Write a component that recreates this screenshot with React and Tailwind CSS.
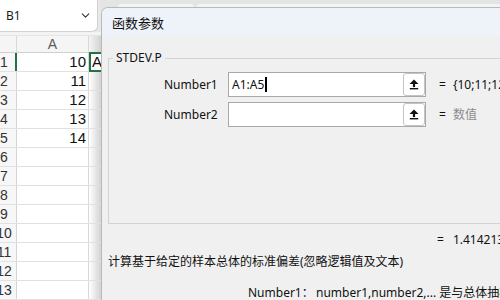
import React from 'react';
import { ChevronDown } from 'lucide-react';

const ROWS = [10, 11, 12, 13, 14, null, null, null, null, null, null, null, null];

const RefIcon = () => (
  <svg width="10" height="11" viewBox="0 0 10 11" fill="#111">
    <polygon points="5,0.5 9.5,5 0.5,5" />
    <rect x="3.9" y="4.5" width="2.2" height="3.6" />
    <rect x="0.8" y="9" width="8.4" height="1.4" />
  </svg>
);

const ArgInput = ({ value, cursor }) => (
  <div className="flex h-[25px] w-[198px] items-center justify-between border border-[#a9a9a9] bg-white pl-[3px]">
    <span className="flex items-center text-[12px] leading-[16px] text-[#111]">
      {value}
      {cursor && <span className="ml-[1px] inline-block h-[15px] w-[2px] bg-black" />}
    </span>
    <button
      type="button"
      className="flex h-[23px] w-[22px] items-center justify-center rounded-[3px] border border-[#c4c4c4] bg-white"
    >
      <RefIcon />
    </button>
  </div>
);

const Sheet = () => (
  <div className="flex w-[101px] shrink-0 flex-col overflow-hidden bg-white font-['Liberation_Sans','Noto_Sans_CJK_SC',sans-serif]">
    {/* name box */}
    <div className="flex h-[33px] bg-[#e8e8e8]">
      <div className="-ml-[6px] flex h-[32px] w-[104px] items-center justify-between rounded-br-[6px] border border-t-0 border-[#d2d2d2] bg-white pl-[11px] pr-[5px]">
        <span className="font-['Noto_Sans',sans-serif] text-[12px] text-[#1a1a1a]">B1</span>
        <ChevronDown size={13} strokeWidth={2} className="text-[#333]" />
      </div>
    </div>
    <div className="h-[7px] border-b border-[#e6e6e6] bg-[#f3f3f3]" />
    {/* column header */}
    <div className="flex h-[17px] border-b border-[#d0d0d0] bg-[#f5f5f5]">
      <div className="w-[17px] shrink-0 border-r border-[#d8d8d8]" />
      <div className="flex w-[72px] shrink-0 items-center justify-center border-r border-[#d8d8d8] text-[14px] text-[#5b5b5b]">
        A
      </div>
      <div className="flex-1 bg-linear-to-r from-[#f5f5f5] to-[#d2d2d2]" />
    </div>
    {ROWS.map((v, i) => (
      <div key={i} className="flex h-[19px] shrink-0 border-b border-[#e1e1e1]">
        <div
          className={`flex w-[17px] shrink-0 items-center bg-[#f7f7f7] ${
            i === 0 ? 'border-r-2 border-[#217346]' : 'border-r border-[#d4d4d4]'
          }`}
        >
          <span className="-ml-[9px] w-[26px] shrink-0 text-center text-[14px] text-[#333]">{i + 1}</span>
        </div>
        <div className="flex w-[72px] shrink-0 items-center justify-end border-r border-[#d8d8d8] pr-[2px] text-[15px] text-[#111]">
          {v}
        </div>
        {i === 0 ? (
          <div className="-mt-px flex h-[20px] flex-1 items-center border-2 border-[#217346] pl-[1px] text-[15px] text-[#111]">
            A
          </div>
        ) : (
          <div className="flex-1 bg-linear-to-r from-white to-[#d3d3d3]" />
        )}
      </div>
    ))}
  </div>
);

const Dialog = () => (
  <div className="flex min-w-0 flex-1 flex-col bg-[#e4e4e4]">
    {/* windows behind */}
    <div className="flex h-[7px] shrink-0 items-end gap-[3px] pl-[17px]">
      <div className="h-[3px] w-[76px] rounded-t-[4px] bg-[#f4f4f4]" />
      <div className="h-[3px] flex-1 rounded-tl-[4px] bg-[#f4f4f4]" />
    </div>
    <div className="flex flex-1 flex-col overflow-hidden rounded-tl-[7px] border-l border-t border-[#b9b9b9] bg-[#f0f0f0] font-['Noto_Sans','Noto_Sans_CJK_SC',sans-serif] text-[12px] leading-[16px] text-[#111]">
      <div className="flex h-[29px] shrink-0 items-center bg-[#eef2f9] pl-[10px] text-[13px]">函数参数</div>
      <div className="flex flex-col whitespace-nowrap pt-[13px]">
        <fieldset className="ml-[6px] border border-r-0 border-[#d3d3d3] pb-[96px]">
          <legend className="ml-[4px] px-[3px] text-[12px] leading-[16px]">STDEV.P</legend>
          <div className="flex flex-col gap-[5px] pl-[55px] pt-[6px]">
            <div className="flex items-center">
              <span className="w-[64px] shrink-0">Number1</span>
              <ArgInput value="A1:A5" cursor />
              <span className="ml-[13px]">=</span>
              <span className="ml-[7px]">{'{10;11;12;13;14}'}</span>
            </div>
            <div className="flex items-center">
              <span className="w-[64px] shrink-0">Number2</span>
              <ArgInput value="" />
              <span className="ml-[13px]">=</span>
              <span className="ml-[7px] text-[#8d8d8d]">数值</span>
            </div>
          </div>
        </fieldset>
        <div className="mt-[8px] flex pl-[335px]">
          <span>=</span>
          <span className="ml-[9px]">1.414213562</span>
        </div>
        <div className="mt-[6px] pl-[6px]">计算基于给定的样本总体的标准偏差(忽略逻辑值及文本)</div>
        <div className="mt-[15px] flex pl-[146px]">
          <span className="w-[68px] shrink-0">Number1：</span>
          <span>number1,number2,... 是与总体抽样的样本相对应的 1 到 255 个数值参数</span>
        </div>
      </div>
    </div>
  </div>
);

export default function App() {
  return (
    <div className="flex h-[300px] w-[500px] overflow-hidden bg-[#e8e8e8]">
      <Sheet />
      <Dialog />
    </div>
  );
}
